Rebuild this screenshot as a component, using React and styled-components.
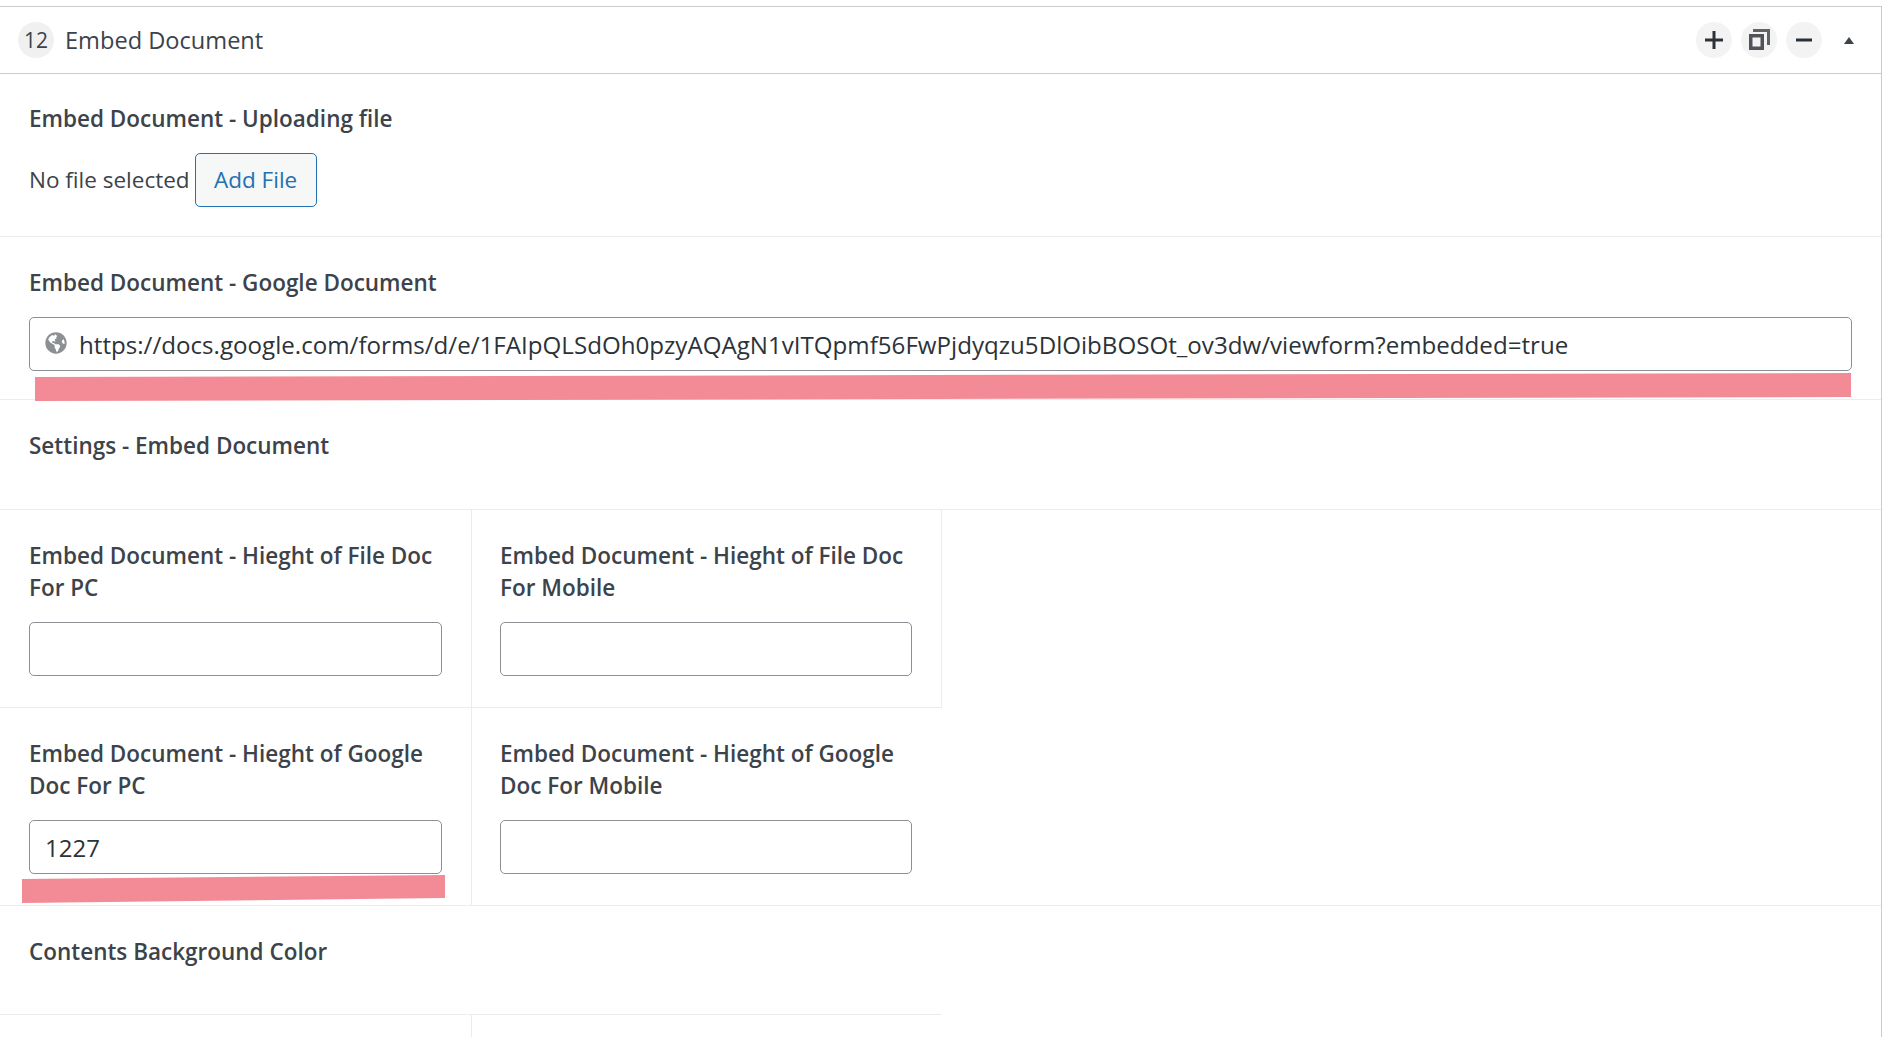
import styled, { createGlobalStyle } from "styled-components";
import { FaGlobeAmericas } from "react-icons/fa";

const URL_VALUE =
  "https://docs.google.com/forms/d/e/1FAIpQLSdOh0pzyAQAgN1vITQpmf56FwPjdyqzu5DlOibBOSOt_ov3dw/viewform?embedded=true";

const App = () => {
  return (
    <>
      <GlobalStyle />
      <Panel>
        <Header>
          <Badge>12</Badge>
          <Title>Embed Document</Title>
          <Actions>
            <RoundButton>
              <svg width="18" height="18" viewBox="0 0 18 18">
                <path d="M7.5 0h3v7.5H18v3h-7.5V18h-3v-7.5H0v-3h7.5z" fill="#2c3338" />
              </svg>
            </RoundButton>
            <RoundButton>
              <svg width="22" height="22" viewBox="0 0 22 22">
                <path d="M5 0h17v16h-3V3H5z" fill="#5f6267" />
                <path d="M1 5h15v16H1zM4.500 8.500v9h8v-9z" fill="#50545a" fillRule="evenodd" />
              </svg>
            </RoundButton>
            <RoundButton>
              <svg width="16" height="16" viewBox="0 0 16 16">
                <path d="M0 6.500h16v3H0z" fill="#2c3338" />
              </svg>
            </RoundButton>
            <Caret />
          </Actions>
        </Header>

        <Section $top={29} $bottom={29}>
          <Label>Embed Document - Uploading file</Label>
          <FileRow>
            <span>No file selected</span>
            <AddButton>Add File</AddButton>
          </FileRow>
        </Section>

        <Section $top={30} $bottom={28}>
          <Label>Embed Document - Google Document</Label>
          <UrlField>
            <Globe><FaGlobeAmericas size={22} /></Globe>
            <UrlInput readOnly value={URL_VALUE} />
            <UrlMark />
          </UrlField>
        </Section>

        <Section $top={30} $bottom={47}>
          <Label>Settings - Embed Document</Label>
        </Section>

        <Grid>
          <Cell>
            <Label>Embed Document - Hieght of File Doc For PC</Label>
            <Input readOnly />
          </Cell>
          <Cell>
            <Label>Embed Document - Hieght of File Doc For Mobile</Label>
            <Input readOnly />
          </Cell>
        </Grid>

        <Grid $full>
          <Cell>
            <Label>Embed Document - Hieght of Google Doc For PC</Label>
            <Field>
              <Input readOnly value="1227" />
              <SlantMark />
            </Field>
          </Cell>
          <Cell $open>
            <Label>Embed Document - Hieght of Google Doc For Mobile</Label>
            <Input readOnly />
          </Cell>
        </Grid>

        <Section $top={30} $bottom={46} $plain>
          <Label>Contents Background Color</Label>
        </Section>

        <Grid $tail>
          <Cell />
          <Cell $open />
        </Grid>
      </Panel>
    </>
  );
};

export default App;

const GlobalStyle = createGlobalStyle`
  html, body {
    margin: 0;
    height: 100%;
    overflow: hidden;
    background: #ffffff;
  }
  body {
    color: #3c434a;
    font-family: "Open Sans", "Noto Sans", sans-serif;
    font-size: 22.5px;
    line-height: 32px;
  }
`;

const Panel = styled.div`
  width: 1882px;
  height: 1031px;
  box-sizing: border-box;
  margin-top: 6px;
  border-top: 1px solid #c9c9cf;
  border-right: 1px solid #c9c9cf;
`;

const Header = styled.div`
  height: 67px;
  box-sizing: border-box;
  padding: 0 27px 0 18px;
  display: flex;
  align-items: center;
  border-bottom: 1px solid #c9c9cf;
`;

const Badge = styled.div`
  width: 36px;
  height: 36px;
  border-radius: 50%;
  background: #f0f0f1;
  display: flex;
  align-items: center;
  justify-content: center;
  font-size: 21px;
`;

const Title = styled.div`
  margin-left: 11px;
  font-size: 23.6px;
`;

const Actions = styled.div`
  margin-left: auto;
  display: flex;
  align-items: center;
  gap: 9px;
`;

const RoundButton = styled.div`
  width: 36px;
  height: 36px;
  border-radius: 50%;
  background: #f3f3f4;
  display: flex;
  align-items: center;
  justify-content: center;
`;

const Caret = styled.div`
  margin-left: 13px;
  width: 0;
  height: 0;
  border-left: 5px solid transparent;
  border-right: 5px solid transparent;
  border-bottom: 7px solid #3c434a;
`;

const Section = styled.div`
  padding: ${(p) => p.$top}px 29px ${(p) => p.$bottom}px 29px;
  border-bottom: ${(p) => (p.$plain ? "none" : "1px solid #ececee")};
`;

const Label = styled.div`
  font-weight: 600;
  font-size: 22.5px;
  margin-bottom: 18px;

  ${Section} > &:last-child {
    margin-bottom: 0;
  }
`;

const FileRow = styled.div`
  display: flex;
  align-items: center;
  gap: 5px;
`;

const AddButton = styled.div`
  width: 122px;
  height: 54px;
  box-sizing: border-box;
  border: 1px solid #2271b1;
  border-radius: 5px;
  background: #f6f7f7;
  color: #2271b1;
  display: flex;
  align-items: center;
  justify-content: center;
`;

const UrlField = styled.div`
  position: relative;
  height: 54px;
`;

const Globe = styled.span`
  position: absolute;
  left: 16px;
  top: 15px;
  display: flex;
  color: #8c8f94;
`;

const Input = styled.input`
  display: block;
  width: 100%;
  height: 54px;
  box-sizing: border-box;
  padding: 0 15px;
  border: 1px solid #8c8f94;
  border-radius: 5px;
  background: #ffffff;
  color: #2c3338;
  font-family: inherit;
  font-size: 24px;
  outline: none;
`;

const UrlInput = styled(Input)`
  padding-left: 49px;
  font-size: 24.14px;
`;

const UrlMark = styled.div`
  position: absolute;
  left: 6px;
  right: 1px;
  top: 56px;
  height: 28px;
  background: #f38b96;
  clip-path: polygon(0 4px, 100% 0, 100% 24px, 0 100%);
`;

const Grid = styled.div`
  display: grid;
  grid-template-columns: 472px 470px;
  width: ${(p) => (p.$full ? "auto" : p.$tail ? "941px" : "942px")};
  border-bottom: ${(p) => (p.$tail ? "none" : "1px solid #ececee")};
  border-top: ${(p) => (p.$tail ? "1px solid #ececee" : "none")};
`;

const Cell = styled.div`
  padding: 30px ${(p) => (p.$open ? 30 : 29)}px 31px 29px;
  border-right: ${(p) => (p.$open ? "none" : "1px solid #ececee")};

  & + & {
    padding-left: 28px;
  }
`;

const Field = styled.div`
  position: relative;
`;

const SlantMark = styled.div`
  position: absolute;
  left: -7px;
  top: 55px;
  width: 423px;
  height: 28px;
  background: #f38b96;
  clip-path: polygon(0 4px, 100% 0, 100% 23px, 0 100%);
`;
